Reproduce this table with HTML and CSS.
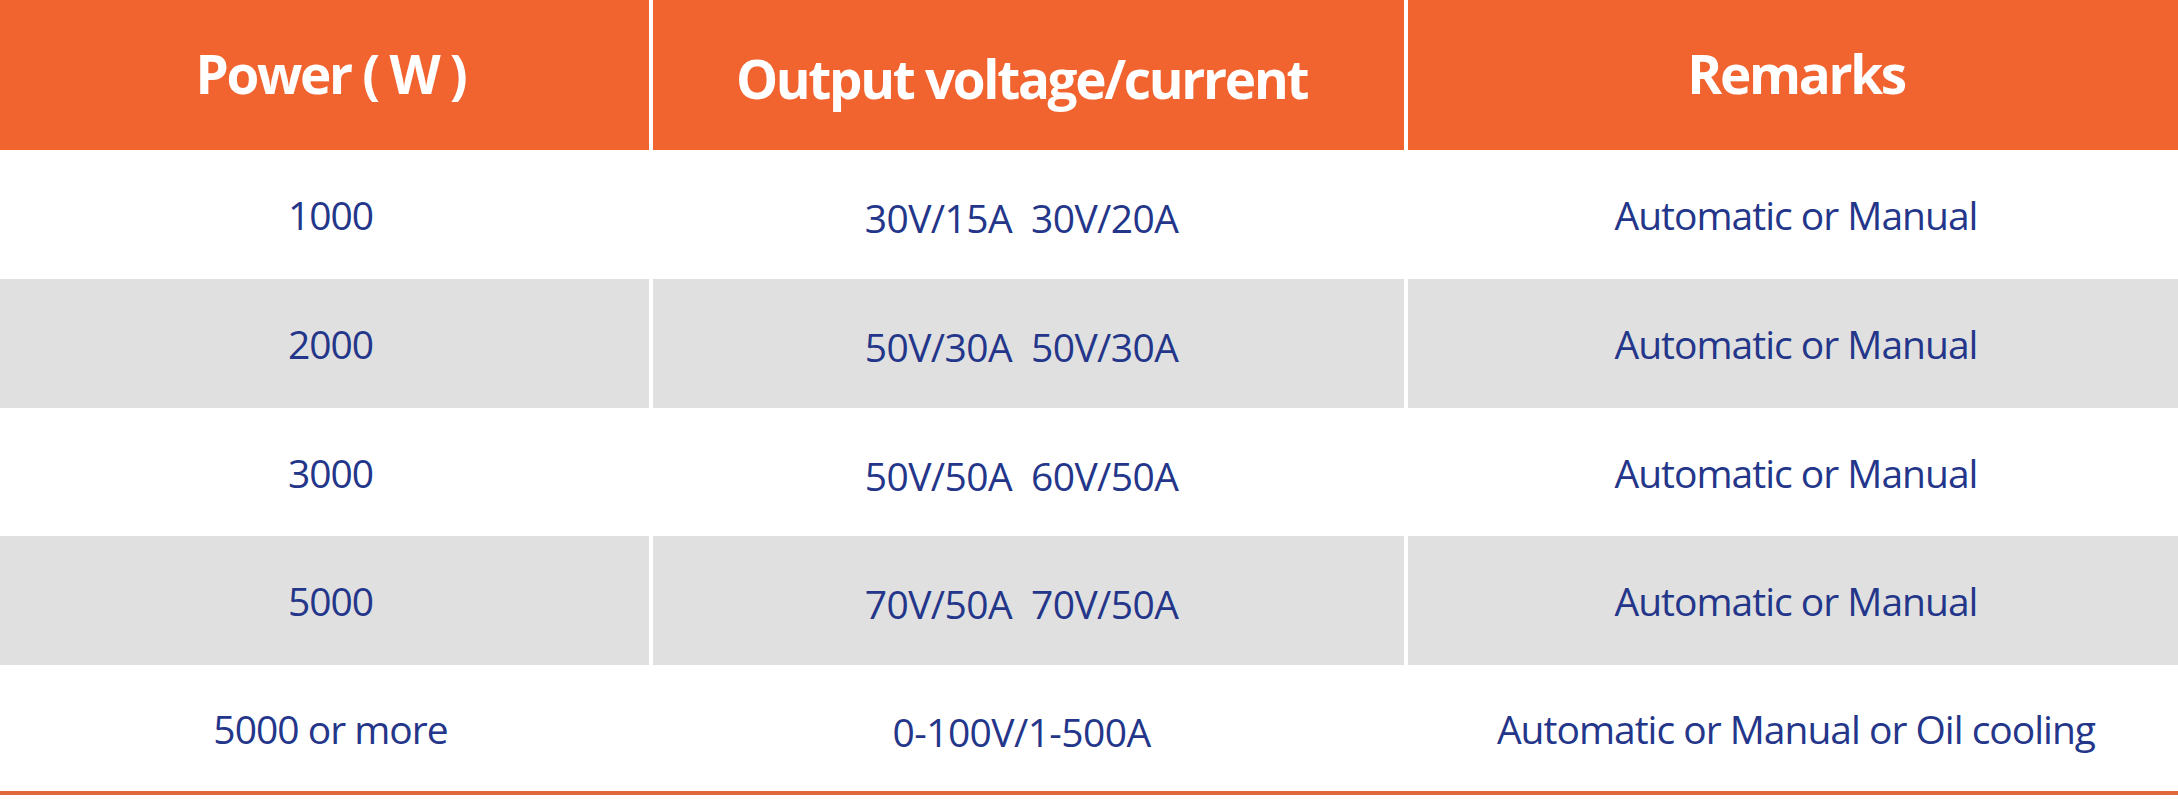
FILE: index.html
```html
<!DOCTYPE html>
<html lang="en">
<head>
<meta charset="utf-8">
<title>Power table</title>
<link rel="stylesheet" href="styles.css">
</head>
<body>
<div class="table">
  <div class="row head">
    <div class="cell c1">Power ( W )</div>
    <div class="cell c2">Output voltage/current</div>
    <div class="cell c3">Remarks</div>
  </div>
  <div class="row r1">
    <div class="cell c1">1000</div>
    <div class="cell c2 mid">30V/15A&nbsp;&nbsp;30V/20A</div>
    <div class="cell c3">Automatic or Manual</div>
  </div>
  <div class="row r2 gray">
    <div class="cell c1">2000</div>
    <div class="cell c2 mid">50V/30A&nbsp;&nbsp;50V/30A</div>
    <div class="cell c3">Automatic or Manual</div>
  </div>
  <div class="row r3">
    <div class="cell c1">3000</div>
    <div class="cell c2 mid">50V/50A&nbsp;&nbsp;60V/50A</div>
    <div class="cell c3">Automatic or Manual</div>
  </div>
  <div class="row r4 gray">
    <div class="cell c1">5000</div>
    <div class="cell c2 mid">70V/50A&nbsp;&nbsp;70V/50A</div>
    <div class="cell c3">Automatic or Manual</div>
  </div>
  <div class="row r5 last">
    <div class="cell c1">5000 or more</div>
    <div class="cell c2 mid">0-100V/1-500A</div>
    <div class="cell c3">Automatic or Manual or Oil cooling</div>
  </div>
</div>
</body>
</html>
```
FILE: styles.css
```css
html, body {
  margin: 0;
  padding: 0;
  background: #ffffff;
}

body {
  font-family: "Open Sans", "Noto Sans", sans-serif;
  color: #24368a;
}

.table {
  display: flex;
  flex-direction: column;
  width: 2178px;
}

.row {
  display: grid;
  grid-template-columns: 649px 751px 1fr;
  column-gap: 4px;
  height: 129px;
}

.cell {
  display: flex;
  align-items: center;
  justify-content: center;
  font-size: 39px;
  letter-spacing: -1px;
  white-space: nowrap;
}

.c1 {
  padding-left: 12px;
}

.c2 {
  padding-right: 14px;
}

.c3 {
  padding-left: 6px;
}

.mid {
  padding-top: 6px;
  letter-spacing: -0.6px;
}

.head {
  height: 150px;
}

.head .cell {
  background: #f1632f;
  color: #ffffff;
  font-weight: 700;
  font-size: 53px;
  letter-spacing: -2.3px;
  padding-bottom: 4px;
}

.head .c2 {
  padding-bottom: 0;
  padding-top: 6px;
}

.r3 {
  height: 128px;
}

.gray .cell {
  background: #e0e0e0;
}

.last {
  height: 126px;
  border-bottom: 4px solid #e2683a;
}
```
